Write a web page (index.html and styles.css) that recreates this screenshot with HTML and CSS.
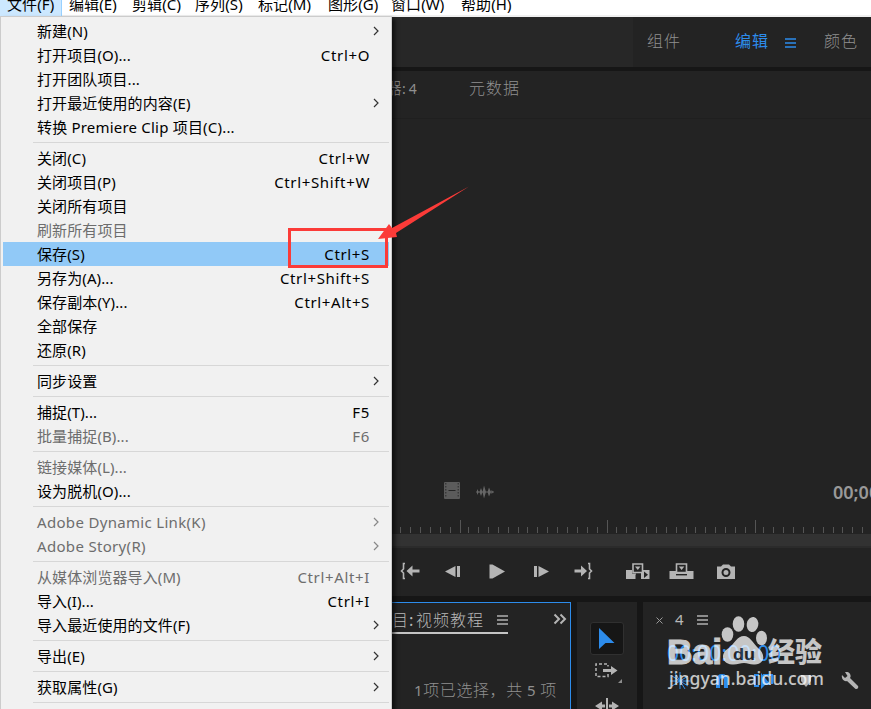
FILE: index.html
```
<!DOCTYPE html>
<html lang="zh-CN">
<head>
    <meta charset="UTF-8">
    <title>Premiere Pro</title>
    <link rel="stylesheet" href="styles.css">
</head>
<body>

<div class="app">
    <nav class="menubar">
        <span class="open">文件(F)</span>
        <span>编辑(E)</span>
        <span>剪辑(C)</span>
        <span>序列(S)</span>
        <span class="wide">标记(M)</span>
        <span>图形(G)</span>
        <span class="wide">窗口(W)</span>
        <span>帮助(H)</span>
    </nav>

    <header class="workspaces">
        <div class="tabs">
            <span class="tab-assembly">组件</span>
            <span class="tab-edit">编辑</span>
            <svg class="burger" width="11" height="10"><path d="M0 1h11M0 5h11M0 9h11"/></svg>
            <span>颜色</span>
        </div>
    </header>

    <section class="source">
        <div class="source-tabs">
            <span class="mixer">音频剪辑混合器<i>: 4</i></span>
            <span>元数据</span>
        </div>
        <div class="source-info">
            <svg width="16" height="17" viewBox="0 0 16 17">
                <rect width="16" height="17" rx="1" fill="#5b5b5b"/>
                <path d="M1.8 1v15M14.2 1v15" stroke="#2b2b2b" stroke-dasharray="1.5 1.5"/>
                <path d="M4.5 8.500h7" stroke="#252525"/>
            </svg>
            <svg width="18" height="14" viewBox="0 0 18 14">
                <path d="M0 6.500h18v1H0zM1 4l2 3l-2 3zM5 3l1.500 4L5 11L3.500 7zM8 0.500L10 7L8 13.500L6.500 7zM13 2.500L15 7l-2 4.500L11.500 7zM15.500 5l2 2l-2 2z" fill="#666"/>
            </svg>
            <span class="duration">00;00;00</span>
        </div>
        <svg class="ruler" width="871" height="14">
            <path d="M460.500 0v13M607.500 0v13M755.500 0v13"/>
            <path d="M400.500 7v6M410.500 7v6M420.500 7v6M430.500 7v6M440.500 7v6M450.500 7v6M468.500 7v6M478.500 7v6M488.500 7v6M498.500 7v6M508.500 7v6M518.500 7v6M527.500 7v6M537.500 7v6M547.500 7v6M557.500 7v6M567.500 7v6M577.500 7v6M587.500 7v6M597.500 7v6M616.500 7v6M626.500 7v6M636.500 7v6M646.500 7v6M656.500 7v6M666.500 7v6M676.500 7v6M686.500 7v6M695.500 7v6M705.500 7v6M715.500 7v6M725.500 7v6M735.500 7v6M745.500 7v6M763.500 7v6M773.500 7v6M783.500 7v6M793.500 7v6M803.500 7v6M813.500 7v6M823.500 7v6M833.500 7v6M842.500 7v6M852.500 7v6M862.500 7v6"/>
        </svg>
        <div class="scrollbar"></div>
        <div class="transport">
            <!-- go to in point -->
            <svg viewBox="0 0 26 18"><path class="line" d="M9 1.500H7.500V7L5.500 9L7.500 11V16.500H9"/><path d="M10.500 9l6-5.500v4h7v3h-7v4z"/></svg>
            <!-- step back -->
            <svg viewBox="0 0 26 18"><path d="M5 9.500L15.500 4v11zM17 4h3v11h-3z"/></svg>
            <!-- play -->
            <svg viewBox="0 0 26 18"><path d="M6.500 2.500h3L22 9.500L9.500 16.500h-3z"/></svg>
            <!-- step forward -->
            <svg viewBox="0 0 26 18"><path d="M7 4h3v11H7zM11.500 4L22 9.500L11.500 15z"/></svg>
            <!-- go to out point -->
            <svg viewBox="0 0 26 18"><path class="line" d="M18 1.500h1.500V7l2 2l-2 2v5.500H18"/><path d="M17 9l-6-5.500v4H4.500v3H11v4z"/></svg>
            <!-- insert -->
            <svg class="insert" viewBox="0 0 26 18"><path d="M1 8h6v3.500h4V17H1zM16 8h8.500v9H16z"/><path class="line hole" d="M8 2h9.500v8.500H8z"/><path d="M10 4.500h5.500l-2.700 3.500z"/><path class="cut" d="M10.500 12.500h5V18h-5zM19 9.500l4 3.200l-4 3.300z"/></svg>
            <!-- overwrite -->
            <svg viewBox="0 0 26 18"><path d="M1.500 9h24v8h-24z"/><path class="line hole" d="M8.500 2h10v8.500h-10z"/><path d="M10.800 4.500h5.500l-2.700 3.500z"/><path class="cut" d="M8 12h11v1.400H8z"/></svg>
            <!-- export frame -->
            <svg viewBox="0 0 26 18"><path d="M5 4.500h4l2-2h6l2 2h4V17H5z"/><circle class="lens" cx="14" cy="10.500" r="3.500"/></svg>
        </div>
    </section>

    <div class="bottom">
        <section class="project">
            <div class="project-head">
                <div class="project-tab">
                    <span>项目<i>:</i>视频教程</span>
                    <svg class="burger" width="11" height="10"><path d="M0 1h11M0 5h11M0 9h11"/></svg>
                </div>
                <svg class="more" width="14" height="12"><path d="M1.500 1.500L6 6L1.500 10.500M7.500 1.500L12 6L7.500 10.500"/></svg>
            </div>
            <p class="project-status"><b>1</b>项已选择，共 <b>5</b> 项</p>
        </section>

        <section class="tools">
            <div class="tool active">
                <svg width="16" height="22"><path d="M0 0v21l6.500-6H15.500z" fill="#2d8ceb"/></svg>
            </div>
            <div class="tool">
                <svg width="29" height="22">
                    <path d="M15 13v2.500H3V3h12v2.500" fill="none" stroke="#b4b4b4" stroke-width="1.500" stroke-dasharray="3 2"/>
                    <path d="M10 8h8V5l6.500 4.500L18 14v-3h-8z" fill="#b4b4b4"/>
                    <path d="M29 18v4h-4z" fill="#8c8c8c"/>
                </svg>
            </div>
            <div class="tool">
                <svg width="24" height="18"><path d="M11 1h2v17h-2zM0 9l7-4.500v3h3v3H7v3zM24 9l-7-4.500v3h-3v3h3v3z" fill="#b4b4b4"/></svg>
            </div>
        </section>

        <section class="timeline">
            <div class="timeline-tab">
                <svg width="7" height="7"><path d="M.5.5l6 6M6.500.5l-6 6" stroke="#999"/></svg>
                <span>4</span>
                <svg class="burger" width="11" height="10"><path d="M0 1h11M0 5h11M0 9h11"/></svg>
            </div>
            <div class="timecode">00:00:00:00</div>
            <div class="timeline-tools">
                <svg width="20" height="18"><path d="M10 0v17M2 4l16 10M2 14L18 4M5 1l10 16M0 9h20" stroke="#2d8ceb" fill="none"/></svg>
                <svg width="16" height="18"><path d="M2 16V7a6 5 0 0 1 12 0v9h-4V8a2 2 0 0 0-4 0v8z" fill="#2d8ceb"/></svg>
                <svg width="19" height="18"><path d="M5 3H1v11h4M9 3h9v9" fill="none" stroke="#2d8ceb" stroke-width="2"/><path d="M7 1v16l4-4h6z" fill="#2d8ceb"/></svg>
                <svg width="12" height="16"><path d="M1 2h10v6l-5 6l-5-6z" fill="#b4b4b4"/></svg>
                <svg width="18" height="18"><path d="M4 0C8-1 11 3 9 6L17 14C18 16 16 18 14 16.500L6 9C3 10 0 7 1 3L4 6L6.500 4z" fill="#b4b4b4"/></svg>
            </div>
        </section>
    </div>
</div>

<div class="menu">
    <div class="item"><span>新建(N)</span><svg class="sub" viewBox="0 0 6 10"><path d="M1 1l4 4l-4 4"/></svg></div>
    <div class="item"><span>打开项目(O)...</span><kbd>Ctrl+O</kbd></div>
    <div class="item"><span>打开团队项目...</span></div>
    <div class="item"><span>打开最近使用的内容(E)</span><svg class="sub" viewBox="0 0 6 10"><path d="M1 1l4 4l-4 4"/></svg></div>
    <div class="item"><span class="mixed">转换 Premiere Clip 项目(C)...</span></div>
    <hr>
    <div class="item"><span>关闭(C)</span><kbd>Ctrl+W</kbd></div>
    <div class="item"><span>关闭项目(P)</span><kbd>Ctrl+Shift+W</kbd></div>
    <div class="item"><span>关闭所有项目</span></div>
    <div class="item disabled"><span>刷新所有项目</span></div>
    <div class="item selected"><span>保存(S)</span><kbd>Ctrl+S</kbd></div>
    <div class="item"><span>另存为(A)...</span><kbd>Ctrl+Shift+S</kbd></div>
    <div class="item"><span>保存副本(Y)...</span><kbd>Ctrl+Alt+S</kbd></div>
    <div class="item"><span>全部保存</span></div>
    <div class="item"><span>还原(R)</span></div>
    <hr>
    <div class="item"><span>同步设置</span><svg class="sub" viewBox="0 0 6 10"><path d="M1 1l4 4l-4 4"/></svg></div>
    <hr>
    <div class="item"><span>捕捉(T)...</span><kbd>F5</kbd></div>
    <div class="item disabled"><span>批量捕捉(B)...</span><kbd>F6</kbd></div>
    <hr>
    <div class="item disabled"><span>链接媒体(L)...</span></div>
    <div class="item"><span>设为脱机(O)...</span></div>
    <hr>
    <div class="item disabled"><span class="latin">Adobe Dynamic Link(K)</span><svg class="sub" viewBox="0 0 6 10"><path d="M1 1l4 4l-4 4"/></svg></div>
    <div class="item disabled"><span class="latin">Adobe Story(R)</span><svg class="sub" viewBox="0 0 6 10"><path d="M1 1l4 4l-4 4"/></svg></div>
    <hr>
    <div class="item disabled"><span>从媒体浏览器导入(M)</span><kbd>Ctrl+Alt+I</kbd></div>
    <div class="item"><span>导入(I)...</span><kbd>Ctrl+I</kbd></div>
    <div class="item"><span>导入最近使用的文件(F)</span><svg class="sub" viewBox="0 0 6 10"><path d="M1 1l4 4l-4 4"/></svg></div>
    <hr>
    <div class="item"><span>导出(E)</span><svg class="sub" viewBox="0 0 6 10"><path d="M1 1l4 4l-4 4"/></svg></div>
    <hr>
    <div class="item"><span>获取属性(G)</span><svg class="sub" viewBox="0 0 6 10"><path d="M1 1l4 4l-4 4"/></svg></div>
    <hr>
</div>

<!-- red box and arrow around Ctrl+S -->
<svg class="callout" width="190" height="90" viewBox="284 182 190 90">
    <rect x="289.500" y="229.500" width="97" height="37" fill="none" stroke="#fb3b38" stroke-width="3"/>
    <path d="M378 239L389 224L392 228L469 186.500L396 233L397 237Z" fill="#fb3b38"/>
</svg>

<svg class="watermark" width="170" height="85" viewBox="660 610 170 85">
    <g fill="#fff">
        <ellipse cx="727.500" cy="634.500" rx="5.800" ry="7.300"/>
        <ellipse cx="738.500" cy="624" rx="5.800" ry="7.800"/>
        <ellipse cx="752.500" cy="624.500" rx="5.800" ry="7.500" transform="rotate(10 752.500 624.500)"/>
        <ellipse cx="761.500" cy="638" rx="5.500" ry="7.300"/>
        <path d="M744 636C750 636 753 643 758 648C765 653 766 664 755 664.500C750 665 748 663 744 663C740 663 737 665 732 664.500C720 663 721 652 729 648C735 643 737 636 744 636Z"/>
        <text class="wm-bai" x="667" y="664" textLength="55" lengthAdjust="spacingAndGlyphs">Bai</text>
        <text class="wm-cn" x="768" y="661.500" textLength="54" lengthAdjust="spacingAndGlyphs">经验</text>
        <text class="wm-url" x="669" y="685" textLength="155" lengthAdjust="spacingAndGlyphs">jingyan.baidu.com</text>
    </g>
    <text class="wm-du" x="733" y="660" textLength="22" lengthAdjust="spacingAndGlyphs">du</text>
</svg>

</body>
</html>
```
FILE: styles.css
```
* {
    box-sizing: border-box;
}

body {
    margin: 0;
    overflow: hidden;
    font-family: "Noto Sans", "Noto Sans CJK SC", sans-serif;
    font-size: 15px;
}

svg {
    display: block;
    flex: none;
}

i, b {
    font-style: normal;
    font-weight: normal;
}

.app {
    display: flex;
    flex-direction: column;
    width: 871px;
    height: 709px;
    overflow: hidden;
    background: #161616;
}

/* window menu bar, cut off by the top edge */
.menubar {
    display: flex;
    flex: none;
    height: 17px;
    background: #fff;
    border-bottom: 2px solid #f0f0f0;
    color: #000;
    white-space: nowrap;
}

.menubar span {
    width: 63px;
    height: 16px;
    padding-left: 7px;
    line-height: 8px;
    font-size: 15px;
    letter-spacing: 0.1px;
}

.menubar .open {
    width: 62px;
    background: #cce8ff;
    border-right: 1px solid #99d1ff;
}

.menubar .wide {
    width: 70px;
}

.workspaces {
    display: flex;
    flex: none;
    justify-content: flex-end;
    height: 50px;
    background: #272727;
}

.tabs {
    display: flex;
    align-items: center;
    width: 238px;
    padding: 0 0 4px 14px;
    background: #232323;
    color: #8f8f8f;
    font: 300 16px "Noto Sans CJK SC", sans-serif;
    letter-spacing: 1px;
    white-space: nowrap;
}

.tab-assembly {
    width: 88px;
}

.tab-edit {
    width: 50px;
    color: #2d8ceb;
    font-weight: 400;
}

.burger {
    stroke: #b0b0b0;
    stroke-width: 1.5;
    fill: none;
}

.tabs .burger {
    margin: 6px 28px 0 0;
    stroke: #2d8ceb;
}

.source {
    display: flex;
    flex-direction: column;
    flex: none;
    height: 525px;
    margin-top: 4px;
    background: #232323;
}

.source-tabs {
    display: flex;
    height: 48px;
    padding: 4px 0 0 288px;
    border-bottom: 1px solid #1f1f1f;
    color: #8f8f8f;
    font: 300 16px/24px "Noto Sans CJK SC", sans-serif;
    letter-spacing: 1px;
    white-space: nowrap;
}

.mixer {
    width: 181px;
    letter-spacing: 0.3px;
}

.mixer i {
    font: 14px "Noto Sans";
    letter-spacing: -0.4px;
}

.source-info {
    display: flex;
    align-items: center;
    height: 31px;
    margin-top: 357px;
    padding-left: 444px;
}

.source-info svg {
    margin: -2px 16px 0 0;
}

.source-info svg + svg {
    margin-top: 0;
}

.duration {
    margin-left: 323px;
    color: #999;
    font: 600 18px "Noto Sans";
    white-space: nowrap;
}

.ruler {
    margin-top: 13px;
    stroke: #555;
}

.scrollbar {
    height: 14px;
    background: #323232;
    border-bottom: 2px solid #2b2b2b;
}

.transport {
    display: flex;
    align-items: center;
    gap: 17.5px;
    height: 46px;
    padding-left: 396px;
}

.transport svg {
    width: 26px;
    height: 18px;
    fill: #b4b4b4;
}

.transport .insert {
    margin-left: 11px;
}

.transport .line {
    fill: none;
    stroke: #b4b4b4;
    stroke-width: 1.6;
}

.transport .hole {
    fill: #232323;
}

.transport .cut {
    fill: #232323;
}

.transport .lens {
    fill: #b4b4b4;
    stroke: #232323;
    stroke-width: 2;
}

.bottom {
    display: flex;
    flex: 1;
    gap: 6px;
    margin-top: 6px;
}

.project {
    flex: none;
    width: 571px;
    border: 1px solid #2d8ceb;
    border-bottom: 0;
    background: #232323;
    color: #b8b8b8;
    font: 300 16px "Noto Sans CJK SC", sans-serif;
    white-space: nowrap;
}

.project-head {
    display: flex;
    justify-content: space-between;
    padding: 2px 3px 0 374px;
}

.project-tab {
    display: flex;
    align-items: center;
    justify-content: space-between;
    width: 133px;
    height: 29px;
    border-bottom: 2px solid #c4c4c4;
    letter-spacing: 1px;
}

.project-tab i {
    display: inline-block;
    width: 7px;
}

.project-tab .burger {
    margin-top: 3px;
}

.more {
    margin-top: 8px;
    fill: none;
    stroke: #b4b4b4;
    stroke-width: 2;
}

.project-status {
    margin: 43px 0 0 413px;
    color: #8f8f8f;
    letter-spacing: 0.6px;
}

.project-status b {
    font: 15px "Noto Sans";
}

.tools {
    display: flex;
    flex: none;
    flex-direction: column;
    align-items: center;
    width: 60px;
    padding-top: 20px;
    background: #232323;
}

.tool {
    display: flex;
    align-items: center;
    justify-content: center;
    flex: none;
    height: 34px;
}

.tool.active {
    width: 34px;
    height: 33px;
    border: 1px solid #303030;
    border-radius: 3px;
    background: #161616;
}

.timeline {
    flex: 1;
    min-width: 0;
    background: #232323;
}

.timeline-tab {
    display: flex;
    align-items: center;
    height: 36px;
    padding-left: 13px;
    color: #b8b8b8;
}

.timeline-tab span {
    width: 22px;
    margin: -2px 0 0 12px;
}

.timecode {
    height: 28px;
    padding-left: 24px;
    color: #2d8ceb;
    font: 21px/30px "Noto Sans";
    letter-spacing: 0.15px;
}

.timeline-tools {
    display: flex;
    align-items: center;
    height: 30px;
    padding-left: 27px;
}

.timeline-tools svg {
    margin-right: 24px;
}

.timeline-tools svg:nth-child(4) {
    margin: 0 29px 0 3px;
}

/* File menu, over the panels */
.menu {
    position: absolute;
    top: 16px;
    left: 0;
    width: 392px;
    height: 700px;
    padding: 2px 2px 0;
    background: #f1f1f1;
    border: 1px solid #ccc;
    box-shadow: 3px 3px 4px rgba(0, 0, 0, 0.6);
    color: #000;
}

.item {
    display: flex;
    align-items: center;
    justify-content: space-between;
    height: 24px;
    padding: 0 19px 0 34px;
    white-space: nowrap;
    letter-spacing: 0.1px;
    line-height: 22px;
}

.item .latin {
    letter-spacing: 0.32px;
}

.item .mixed {
    letter-spacing: 0.2px;
}

.item kbd {
    font: inherit;
    letter-spacing: 0.65px;
}

.item.selected {
    background: #91c9f7;
}

.item.disabled {
    color: #6d6d6d;
}

.item .sub {
    width: 6px;
    height: 10px;
    margin-right: -9px;
    fill: none;
    stroke: #333;
    stroke-width: 1.2;
}

.item.disabled .sub {
    stroke: #888;
}

.menu hr {
    height: 1px;
    margin: 3px 0 3px 30px;
    border: 0;
    background: #d7d7d7;
}

.callout {
    position: absolute;
    top: 182px;
    left: 284px;
}

.watermark {
    position: absolute;
    top: 610px;
    left: 660px;
    opacity: 0.74;
}

.wm-bai {
    font: bold 35px "Liberation Sans";
    stroke: #fff;
    stroke-width: 1;
}

.wm-cn {
    font: 900 27px "Noto Sans CJK SC";
}

.wm-url {
    font: 500 18px "Noto Sans";
}

.wm-du {
    font: bold 17px "Liberation Sans";
    fill: #232323;
}
```
